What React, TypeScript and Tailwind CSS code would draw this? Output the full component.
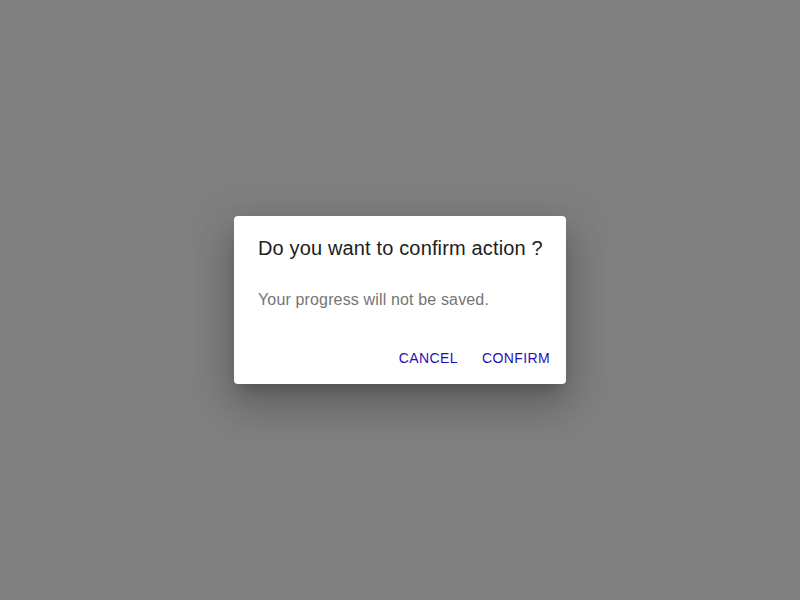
export default function App() {
  return (
    <div className="flex h-[600px] w-[800px] items-center justify-center bg-[#808080] font-['Liberation_Sans',Arial,sans-serif]">
      <div className="flex w-[332px] flex-col rounded bg-white shadow-[0px_11px_15px_-7px_rgba(0,0,0,0.2),0px_24px_38px_3px_rgba(0,0,0,0.14),0px_9px_46px_8px_rgba(0,0,0,0.12)]">
        <h2 className="px-6 pt-4 text-[20px] leading-8 font-normal tracking-[0.15px] whitespace-nowrap text-[#212121]">
          Do you want to confirm action ?
        </h2>
        <div className="px-6 pt-6 pb-5">
          <p className="text-base leading-6 tracking-[0.15px] text-[#757575]">
            Your progress will not be saved.
          </p>
        </div>
        <div className="flex items-center justify-end gap-2 p-2">
          <button className="h-9 rounded px-2 text-sm font-normal tracking-[0.4px] text-[#1f10b8] uppercase">
            Cancel
          </button>
          <button className="h-9 rounded px-2 text-sm font-normal tracking-[0.4px] text-[#1f10b8] uppercase">
            Confirm
          </button>
        </div>
      </div>
    </div>
  );
}
